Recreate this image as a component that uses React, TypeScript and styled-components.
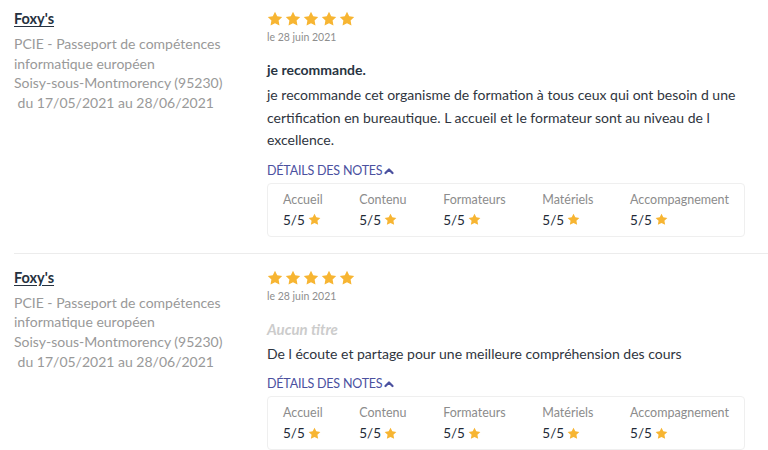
import React from "react";
import styled, { createGlobalStyle } from "styled-components";

const Global = createGlobalStyle`
  html, body { margin: 0; padding: 0; background: #ffffff; }
  body { font-family: Lato, "Open Sans", Arial, sans-serif; -webkit-font-smoothing: antialiased; }
  * { box-sizing: border-box; }
`;

const List = styled.div`
  margin-left: 14px;
  width: 754px;
`;

const Review = styled.article<{ $first?: boolean }>`
  display: grid;
  grid-template-columns: 253px 478px;
  padding: ${(p) => (p.$first ? "9px 0 16px" : "14px 0 16px")};
  border-bottom: ${(p) => (p.$first ? "1px solid #ececec" : "none")};
`;

const Author = styled.div`
  display: flex;
  flex-direction: column;
`;

const Name = styled.a`
  font-size: 14.5px;
  line-height: 20px;
  font-weight: 700;
  color: #263240;
  text-decoration: underline;
  text-underline-offset: 2px;
  align-self: flex-start;
  margin-bottom: 5px;
`;

const Meta = styled.div`
  font-size: 14px;
  line-height: 19.7px;
  color: #999999;
  width: 235px;
`;

const Body = styled.div`
  display: flex;
  flex-direction: column;
`;

const Stars = styled.div`
  display: flex;
  gap: 2px;
  margin-top: 2px;
  height: 16px;
`;

const DateLine = styled.div`
  font-size: 10.5px;
  line-height: 14px;
  color: #8e8e8e;
  margin-top: 3px;
`;

const Title = styled.div<{ $empty?: boolean }>`
  font-size: ${(p) => (p.$empty ? "15px" : "14px")};
  line-height: 20px;
  margin-top: 16px;
  font-weight: 700;
  font-style: ${(p) => (p.$empty ? "italic" : "normal")};
  color: ${(p) => (p.$empty ? "#cccccc" : "#283442")};
`;

const Text = styled.p`
  margin: 4px 0 0;
  font-size: 14px;
  line-height: 22.5px;
  color: #2f3540;
`;

const Toggle = styled.div`
  display: flex;
  align-items: center;
  gap: 2px;
  margin-top: 11px;
  font-size: 12.5px;
  line-height: 16px;
  color: #4b519f;
  text-transform: uppercase;
  letter-spacing: -0.2px;
`;

const NotesBox = styled.div`
  display: flex;
  justify-content: space-between;
  margin-top: 4px;
  padding: 7px 15px 6px 15px;
  border: 1px solid #efefef;
  border-radius: 4px;
`;

const Note = styled.div`
  display: flex;
  flex-direction: column;
`;

const NoteLabel = styled.div`
  font-size: 12.5px;
  line-height: 18px;
  color: #8c8c8c;
`;

const NoteValue = styled.div`
  display: flex;
  align-items: center;
  gap: 3px;
  font-size: 13.5px;
  line-height: 20px;
  color: #222a36;
  margin-top: 1px;
`;

const Star = ({ size }: { size: number }) => (
  <svg width={size} height={size} viewBox="0 0 24 24">
    <path
      d="M12 1.2l3.3 6.8 7.5 1.1-5.4 5.3 1.3 7.4L12 18.3l-6.7 3.5 1.3-7.4-5.4-5.3 7.5-1.1z"
      fill="#f7b532"
    />
  </svg>
);

const Chevron = () => (
  <svg width="10" height="8" viewBox="0 0 10 8">
    <path d="M1.5 6 L5 2.5 L8.5 6" fill="none" stroke="#4b519f" strokeWidth="2.2" strokeLinecap="round" strokeLinejoin="round" />
  </svg>
);

const notes = ["Accueil", "Contenu", "Formateurs", "Matériels", "Accompagnement"];

type R = { title?: string; text: React.ReactNode };

const reviews: R[] = [
  {
    title: "je recommande.",
    text:
      "je recommande cet organisme de formation à tous ceux qui ont besoin d une certification en bureautique. L accueil et le formateur sont au niveau de l excellence.",
  },
  {
    text: "De l écoute et partage pour une meilleure compréhension des cours",
  },
];

export default function App() {
  return (
    <>
      <Global />
      <List>
        {reviews.map((r, i) => (
          <Review key={i} $first={i === 0}>
            <Author>
              <Name>Foxy's</Name>
              <Meta>PCIE - Passeport de compétences informatique européen</Meta>
              <Meta>Soisy-sous-Montmorency (95230)</Meta>
              <Meta>{"\u00a0du 17/05/2021 au 28/06/2021"}</Meta>
            </Author>
            <Body>
              <Stars>
                {[0, 1, 2, 3, 4].map((s) => (
                  <Star key={s} size={16} />
                ))}
              </Stars>
              <DateLine>le 28 juin 2021</DateLine>
              <Title $empty={!r.title}>{r.title ?? "Aucun titre"}</Title>
              <Text>{r.text}</Text>
              <Toggle>
                Détails des notes
                <Chevron />
              </Toggle>
              <NotesBox>
                {notes.map((n) => (
                  <Note key={n}>
                    <NoteLabel>{n}</NoteLabel>
                    <NoteValue>
                      5/5 <Star size={13} />
                    </NoteValue>
                  </Note>
                ))}
              </NotesBox>
            </Body>
          </Review>
        ))}
      </List>
    </>
  );
}
